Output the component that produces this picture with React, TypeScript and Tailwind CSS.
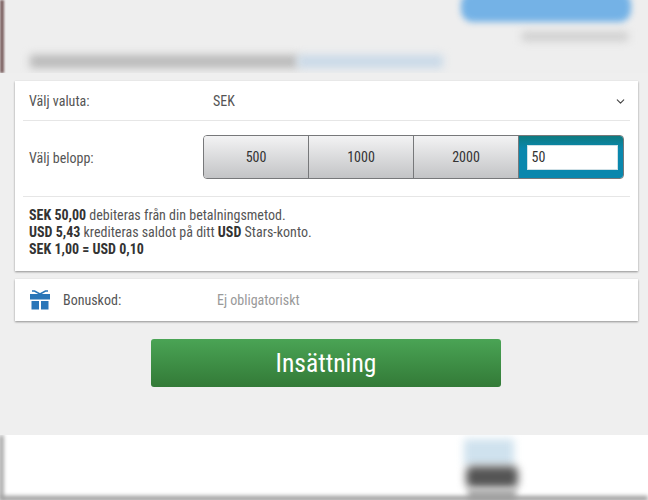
import { ChevronDown } from 'lucide-react';

const font = { fontFamily: 'Roboto, "Liberation Sans", sans-serif', fontStretch: '75%' };

const Blurred = ({ className }: { className: string }) => <div className={`absolute ${className}`}></div>;

const AmountButton = ({ label }: { label: string }) => (
    <button className="w-[105px] h-full border-r border-[#77787a] bg-gradient-to-b from-[#f3f3f4] to-[#c3c4c6] text-[14px] text-[#333]">
        {label}
    </button>
);

const GiftIcon = () => (
    <svg width="20" height="20" viewBox="0 0 20 20" fill="#2a76b8">
        <path d="M0 4h20v5.500H0zM1.500 11H9v8.500H1.500zM11 11h7.500v8.500H11z" />
        <path d="M10 4 4.500 1H2M10 4l5.500-3H18" fill="none" stroke="#2a76b8" strokeWidth="1.500" />
    </svg>
);

export default function App() {
    return (
        <div className="relative w-[648px] h-[500px] overflow-hidden bg-white" style={font}>
            {/* blurred page behind the dialog */}
            <div className="relative h-[73px] overflow-hidden bg-[#eeeeee]">
                <Blurred className="left-0 top-0 w-[4px] h-[73px] bg-[#7f6464] blur-[1px]" />
                <Blurred className="left-[461px] -top-[8px] w-[170px] h-[30px] rounded-xl bg-[#74b2e6] blur-[3px]" />
                <Blurred className="left-[522px] top-[32px] w-[106px] h-[9px] bg-[#cdcdcd] blur-[4px]" />
                <Blurred className="left-[30px] top-[55px] w-[268px] h-[13px] bg-[#b9b9b9] blur-[4px]" />
                <Blurred className="left-[298px] top-[55px] w-[145px] h-[13px] bg-[#c9d9e8] blur-[4px]" />
            </div>

            <div className="h-[362px] bg-[#efefef] pt-2 px-[15px] pr-[10px]">
                <div className="bg-white shadow-[0_1px_2px_rgba(0,0,0,0.4)] h-[190px]">
                    <div className="mx-2 h-[40px] pt-[1px] flex items-center border-b border-[#e6e6e6] text-[14px] text-[#555]">
                        <span className="pl-[6px] w-[190px]">Välj valuta:</span>
                        <span className="flex-1">SEK</span>
                        <ChevronDown size={13} className="mr-[3px] text-[#444]" />
                    </div>
                    <div className="mx-2 h-[76px] pb-[3px] flex items-center border-b border-[#e6e6e6] text-[14px] text-[#555]">
                        <span className="pl-[6px] w-[180px] mt-[2px]">Välj belopp:</span>
                        <div className="flex h-[44px] w-[421px] rounded-[4px] border border-[#77787a] overflow-hidden">
                            <AmountButton label="500" />
                            <AmountButton label="1000" />
                            <AmountButton label="2000" />
                            <div className="flex-1 bg-gradient-to-b from-[#0e7a80] to-[#0a87ad] to-[30%] flex items-center justify-center">
                                <input
                                    readOnly
                                    value="50"
                                    className="w-[91px] h-[25px] ml-[2px] bg-white border border-[#cfe0e6] px-[4px] text-[14px] text-[#333] outline-none"
                                />
                            </div>
                        </div>
                    </div>
                    <div className="pt-[10px] pl-[14px] text-[14px] leading-[17px] text-[#555]">
                        <p><b className="text-[#333]">SEK 50,00</b> debiteras från din betalningsmetod.</p>
                        <p><b className="text-[#333]">USD 5,43</b> krediteras saldot på ditt <b className="text-[#333]">USD</b> Stars-konto.</p>
                        <p><b className="text-[#333]">SEK 1,00 = USD 0,10</b></p>
                    </div>
                </div>

                <div className="mt-2 h-[42px] bg-white shadow-[0_1px_2px_rgba(0,0,0,0.4)] flex items-center text-[14px]">
                    <span className="ml-[15px] w-[33px]"><GiftIcon /></span>
                    <span className="w-[154px] text-[#555]">Bonuskod:</span>
                    <span className="text-[#999]">Ej obligatoriskt</span>
                </div>

                <div className="mt-[18px] ml-[136px]">
                    <button className="w-[350px] h-[48px] rounded-[3px] bg-gradient-to-b from-[#4aa455] to-[#337a37] text-white text-[25.500px]">
                        Insättning
                    </button>
                </div>
            </div>

            <div className="relative h-[65px] overflow-hidden bg-white">
                <Blurred className="left-0 top-0 w-[3px] h-[65px] bg-[#777] blur-[2px]" />
                <Blurred className="left-[464px] top-[4px] w-[50px] h-[26px] bg-[#cfe2ee] blur-[4px]" />
                <Blurred className="left-[466px] top-[31px] w-[52px] h-[22px] rounded-md bg-[#555] blur-[4px]" />
                <Blurred className="left-[468px] top-[54px] w-[48px] h-[12px] bg-[#aaa] blur-[3px]" />
                <Blurred className="left-0 -bottom-[1px] w-full h-[5px] bg-[#999] blur-[2px]" />
            </div>
        </div>
    );
}
